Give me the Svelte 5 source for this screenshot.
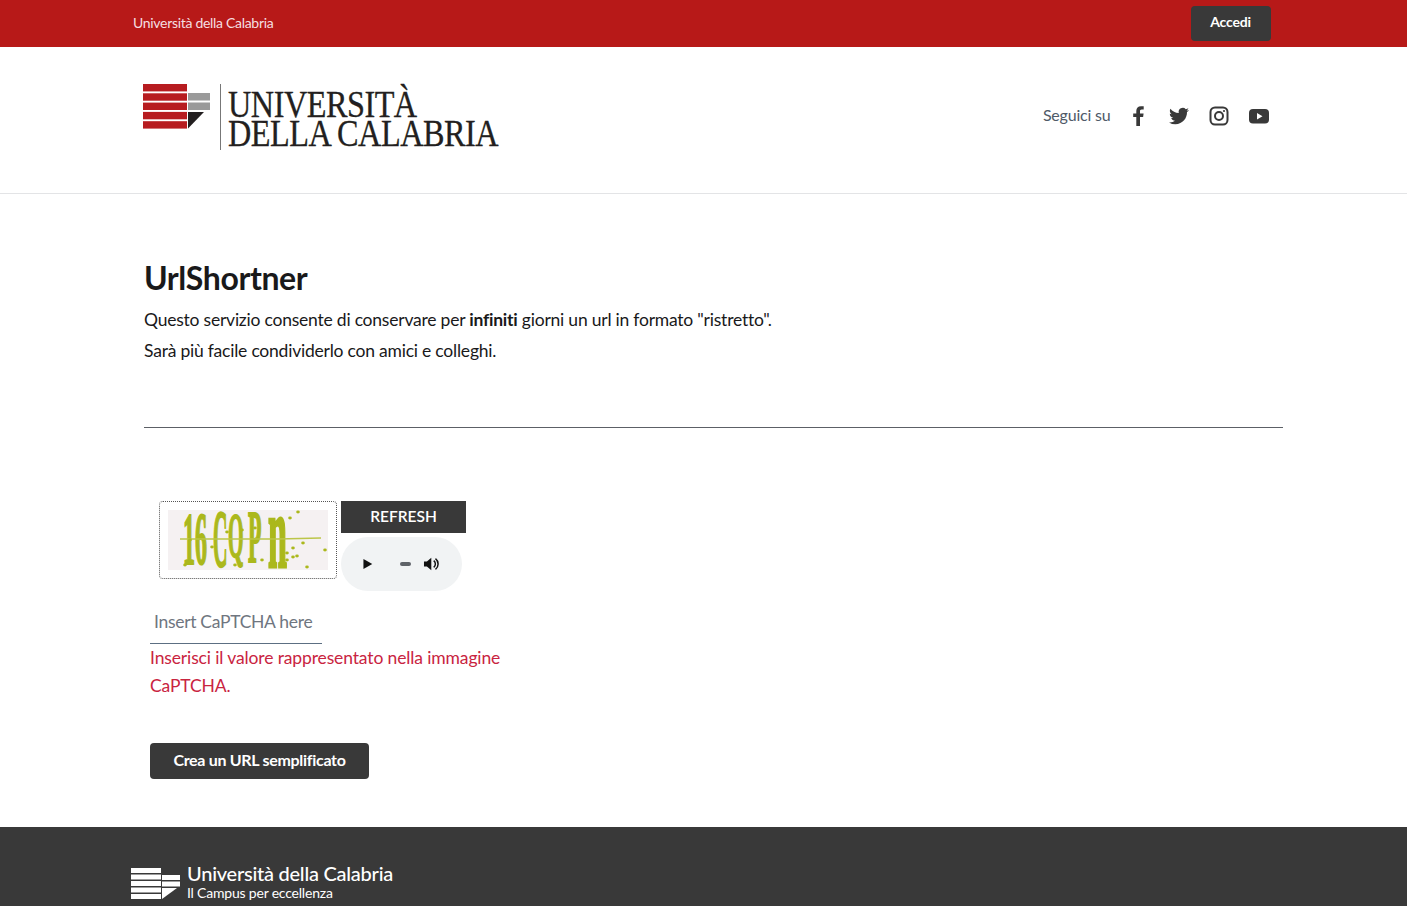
<script>
	let captcha = $state("");
	const noise = [
		[122, 8], [130, 2], [44, 37], [59, 22], [74, 20], [87, 18], [135, 33], [125, 38], [119, 43],
		[125, 47], [119, 50], [157, 40], [139, 57], [94, 50], [17, 55], [67, 55], [129, 46], [22, 30]
	];
</script>

<svelte:head>
	<title>UrlShortner</title>
</svelte:head>

<div class="topbar">
	<div class="container topInner">
		<span class="topName">Università della Calabria</span>
		<button class="accedi">Accedi</button>
	</div>
</div>

<header class="header">
	<div class="container headInner">
		<div class="logo">
			<svg class="mark" width="68" height="46" viewBox="0 0 68 46">
				<g fill="#b71c20">
					<rect x="0" y="0" width="44" height="7.4" />
					<rect x="0" y="9.3" width="44" height="7.4" />
					<rect x="0" y="18.6" width="44" height="7.4" />
					<rect x="0" y="27.9" width="44" height="7.4" />
					<rect x="0" y="37.2" width="44" height="7.4" />
				</g>
				<rect x="45" y="9" width="22" height="7.5" fill="#9a9a9a" />
				<rect x="45" y="18.5" width="22" height="7.5" fill="#9a9a9a" />
				<polygon points="45,28 61,28 45,44.5" fill="#231f20" />
			</svg>
			<div class="logoRule"></div>
			<div class="logoText">
				<div>UNIVERSITÀ</div>
				<div>DELLA CALABRIA</div>
			</div>
		</div>
		<div class="social">
			<span class="seguici">Seguici su</span>
			<svg width="24" height="24" viewBox="0 0 24 24" fill="#393939">
				<path d="M9.3 22V13H6.2V9.5h3.1V7c0-3.1 1.8-4.8 4.6-4.8 1.3 0 2.5.1 2.8.1v3.2h-1.9c-1.5 0-1.8.7-1.8 1.8v2.2h3.6l-.5 3.5h-3.1v9z" />
			</svg>
			<svg width="24" height="24" viewBox="0 0 24 24" fill="#393939">
				<path d="M22 5.9c-.7.3-1.5.5-2.4.6.9-.5 1.5-1.3 1.8-2.3-.8.5-1.7.8-2.6 1A4.1 4.1 0 0 0 11.800 9C8.400 8.800 5.400 7.200 3.400 4.700c-1.100 1.900-.5 4.300 1.300 5.500-.7 0-1.300-.2-1.900-.5 0 2 1.400 3.700 3.300 4.100-.6.200-1.200.2-1.900.1.500 1.600 2 2.800 3.800 2.800A8.300 8.300 0 0 1 2 18.400 11.600 11.600 0 0 0 8.300 20.300c7.600 0 11.900-6.400 11.700-12.200.8-.6 1.500-1.300 2-2.200z" />
			</svg>
			<svg width="24" height="24" viewBox="0 0 24 24" fill="none" stroke="#393939">
				<rect x="3.500" y="3.500" width="17" height="17" rx="4.500" stroke-width="2" />
				<circle cx="12" cy="12" r="4" stroke-width="2" />
				<circle cx="17" cy="7" r="1.100" fill="#393939" stroke="none" />
			</svg>
			<svg width="24" height="24" viewBox="0 0 24 24">
				<rect x="2" y="5" width="20" height="14.500" rx="4" fill="#393939" />
				<polygon points="10,9 10,15.500 15.500,12.200" fill="#fff" />
			</svg>
		</div>
	</div>
</header>

<main class="main">
	<h1>UrlShortner</h1>
	<p>Questo servizio consente di conservare per <strong>infiniti</strong> giorni un url in formato "ristretto".</p>
	<p>Sarà più facile condividerlo con amici e colleghi.</p>
	<hr />

	<div class="captchaRow">
		<div class="captchaBox">
			<svg class="captchaImg" width="160" height="60" viewBox="0 0 160 60">
				<rect width="160" height="60" fill="#f5f1f2" />
				<g fill="#abb81c" stroke="#abb81c" stroke-width="1.2" font-family="'Liberation Serif', serif" font-weight="700" font-size="40">
					<text transform="translate(15 54) scale(.6 1.85)">16</text>
					<text transform="translate(45 56) scale(.5 2)">C</text>
					<text transform="translate(60 47) scale(.5 1.6)">Q</text>
					<text transform="translate(80 52) scale(.55 1.85)">P</text>
					<text transform="translate(100 57) scale(.85 2.6)">n</text>
				</g>
				<path d="M12 29 L110 29 L153 28" stroke="#bcc64a" stroke-width="1.500" fill="none" />
				<g fill="#abb81c">
					{#each noise as [x, y]}
						<ellipse cx={x} cy={y} rx="1.800" ry="1.400" />
					{/each}
				</g>
			</svg>
		</div>
		<div class="captchaSide">
			<button class="refresh">REFRESH</button>
			<div class="audio">
				<svg width="12" height="12" viewBox="0 0 12 12"><polygon points="1.500,1 10.500,6 1.500,11" fill="#111" /></svg>
				<span class="seek"></span>
				<svg width="18" height="18" viewBox="0 0 18 18">
					<path d="M1 6.500h3L8.500 2.500v13L4 11.500H1z" fill="#111" />
					<path d="M11 5.500a4.500 4.500 0 0 1 0 7M12.800 3.500a7 7 0 0 1 0 11" fill="none" stroke="#111" stroke-width="1.500" />
				</svg>
			</div>
		</div>
	</div>

	<input class="captchaInput" type="text" placeholder="Insert CaPTCHA here" bind:value={captcha} />
	<div class="error">Inserisci il valore rappresentato nella immagine CaPTCHA.</div>
	<button class="submit">Crea un URL semplificato</button>
</main>

<footer class="footer">
	<div class="footBrand">
		<svg width="49" height="31" viewBox="0 0 49 31" fill="#fff">
			<rect x="0" y="0" width="30" height="5" />
			<rect x="0" y="6.500" width="30" height="5" />
			<rect x="0" y="13" width="30" height="5" />
			<rect x="0" y="19.500" width="30" height="5" />
			<rect x="0" y="26" width="30" height="5" />
			<rect x="31" y="7" width="18" height="5" />
			<rect x="31" y="13.500" width="18" height="5" />
			<polygon points="31,20 46,20 31,31" />
		</svg>
		<div>
			<div class="footName">Università della Calabria</div>
			<div class="footSub">Il Campus per eccellenza</div>
		</div>
	</div>
</footer>

<style>
	:global(body) {
		font-family: Lato, "Open Sans", sans-serif;
		color: #19191a;
		background: #fff;
	}

	.container {
		width: 1138px;
		margin: 0 auto;
	}

	.topbar {
		background: #b71918;
		height: 47px;
		color: #f5dfe0;
		font-size: 14px;
	}

	.topInner {
		display: flex;
		justify-content: space-between;
		align-items: center;
		height: 47px;
	}

	.topName {
		margin: -3px 0 0 -1.500px;
		letter-spacing: -0.3px;
	}

	.accedi {
		width: 80px;
		height: 35px;
		margin: -1px 2px 0 0;
		padding: 0 0 3px;
		background: #393939;
		color: #fff;
		border: none;
		border-radius: 4px;
		font: 700 14px Lato, sans-serif;
		letter-spacing: -0.2px;
	}

	.header {
		height: 146px;
		border-bottom: 1px solid #e3e4e6;
		box-sizing: content-box;
	}

	.headInner {
		display: flex;
		justify-content: space-between;
		align-items: center;
		height: 146px;
	}

	.logo {
		display: flex;
		align-items: flex-start;
		margin-left: 8px;
		margin-top: -6px;
	}

	.logoRule {
		width: 1px;
		height: 66px;
		background: #777;
		margin: 0 7px 0 9px;
	}

	.logoText {
		font-family: "Liberation Serif", serif;
		font-size: 38px;
		line-height: 29px;
		color: #231f20;
		letter-spacing: -0.6px;
		padding-top: 6px;
		transform: scaleX(0.85);
		transform-origin: left top;
		white-space: nowrap;
		-webkit-text-stroke: 0.3px #231f20;
	}

	.social {
		display: flex;
		align-items: center;
		gap: 16px;
		margin-right: 2px;
		margin-top: -8px;
	}

	.seguici {
		font-size: 16px;
		color: #4f5a68;
		letter-spacing: -0.2px;
		margin-top: -4px;
	}

	.main {
		width: 1139px;
		margin-left: 144px;
		padding-top: 65px;
		height: 633px;
		box-sizing: border-box;
	}

	h1 {
		margin: 0 0 7px;
		font-size: 32px;
		line-height: 38px;
		font-weight: 700;
		letter-spacing: -0.4px;
	}

	p {
		margin: 0;
		font-size: 17.5px;
		line-height: 31px;
		letter-spacing: -0.22px;
	}

	hr {
		margin: 61px 0 0;
		border: none;
		border-top: 1px solid #5c6066;
	}

	.captchaRow {
		display: flex;
		gap: 4px;
		margin: 73px 0 0 15px;
	}

	.captchaBox {
		width: 178px;
		height: 78px;
		box-sizing: border-box;
		border: 1px dotted #555;
		border-radius: 4px;
		padding: 8px;
	}

	.captchaImg {
		display: block;
		overflow: visible;
	}

	.captchaSide {
		display: flex;
		flex-direction: column;
		gap: 4px;
	}

	.refresh {
		width: 125px;
		height: 32px;
		background: #393939;
		color: #fff;
		border: none;
		font: 600 15.5px Lato, sans-serif;
		padding: 0 0 3px;
	}

	.audio {
		width: 121px;
		height: 54px;
		border-radius: 27px;
		background: #f1f3f4;
		display: flex;
		align-items: center;
		padding: 0 21px;
		box-sizing: border-box;
	}

	.seek {
		width: 12px;
		height: 4px;
		border-radius: 2px;
		background: #5f6368;
		margin: 0 12px 0 26px;
	}

	.captchaInput {
		display: block;
		width: 172px;
		height: 41px;
		margin: 12px 0 0 6px;
		padding: 0 0 3px 4px;
		box-sizing: border-box;
		border: none;
		border-bottom: 1px solid #5c6f82;
		font: 17.5px Lato, sans-serif;
		letter-spacing: -0.3px;
		background: transparent;
		outline: none;
	}

	.captchaInput::placeholder {
		color: #6f7680;
		opacity: 1;
	}

	.error {
		width: 370px;
		margin-left: 6px;
		font-size: 17.5px;
		line-height: 28px;
		letter-spacing: -0.13px;
		color: #c9243f;
	}

	.submit {
		display: block;
		margin: 43px 0 0 6px;
		width: 219px;
		height: 36px;
		padding: 0 0 4px;
		background: #393939;
		color: #fff;
		border: none;
		border-radius: 4px;
		font: 700 16px Lato, sans-serif;
		letter-spacing: -0.3px;
	}

	.footer {
		background: #393939;
		height: 79px;
		box-sizing: border-box;
		padding-top: 34px;
		overflow: hidden;
		color: #fff;
	}

	.footBrand {
		display: flex;
		gap: 7px;
		margin-left: 131px;
		align-items: flex-start;
	}

	.footBrand svg {
		margin-top: 7px;
	}

	.footName {
		font-size: 20px;
		line-height: 24px;
		font-weight: 500;
		letter-spacing: -0.25px;
	}

	.footSub {
		font-size: 14px;
		line-height: 16px;
		letter-spacing: -0.2px;
	}
</style>
